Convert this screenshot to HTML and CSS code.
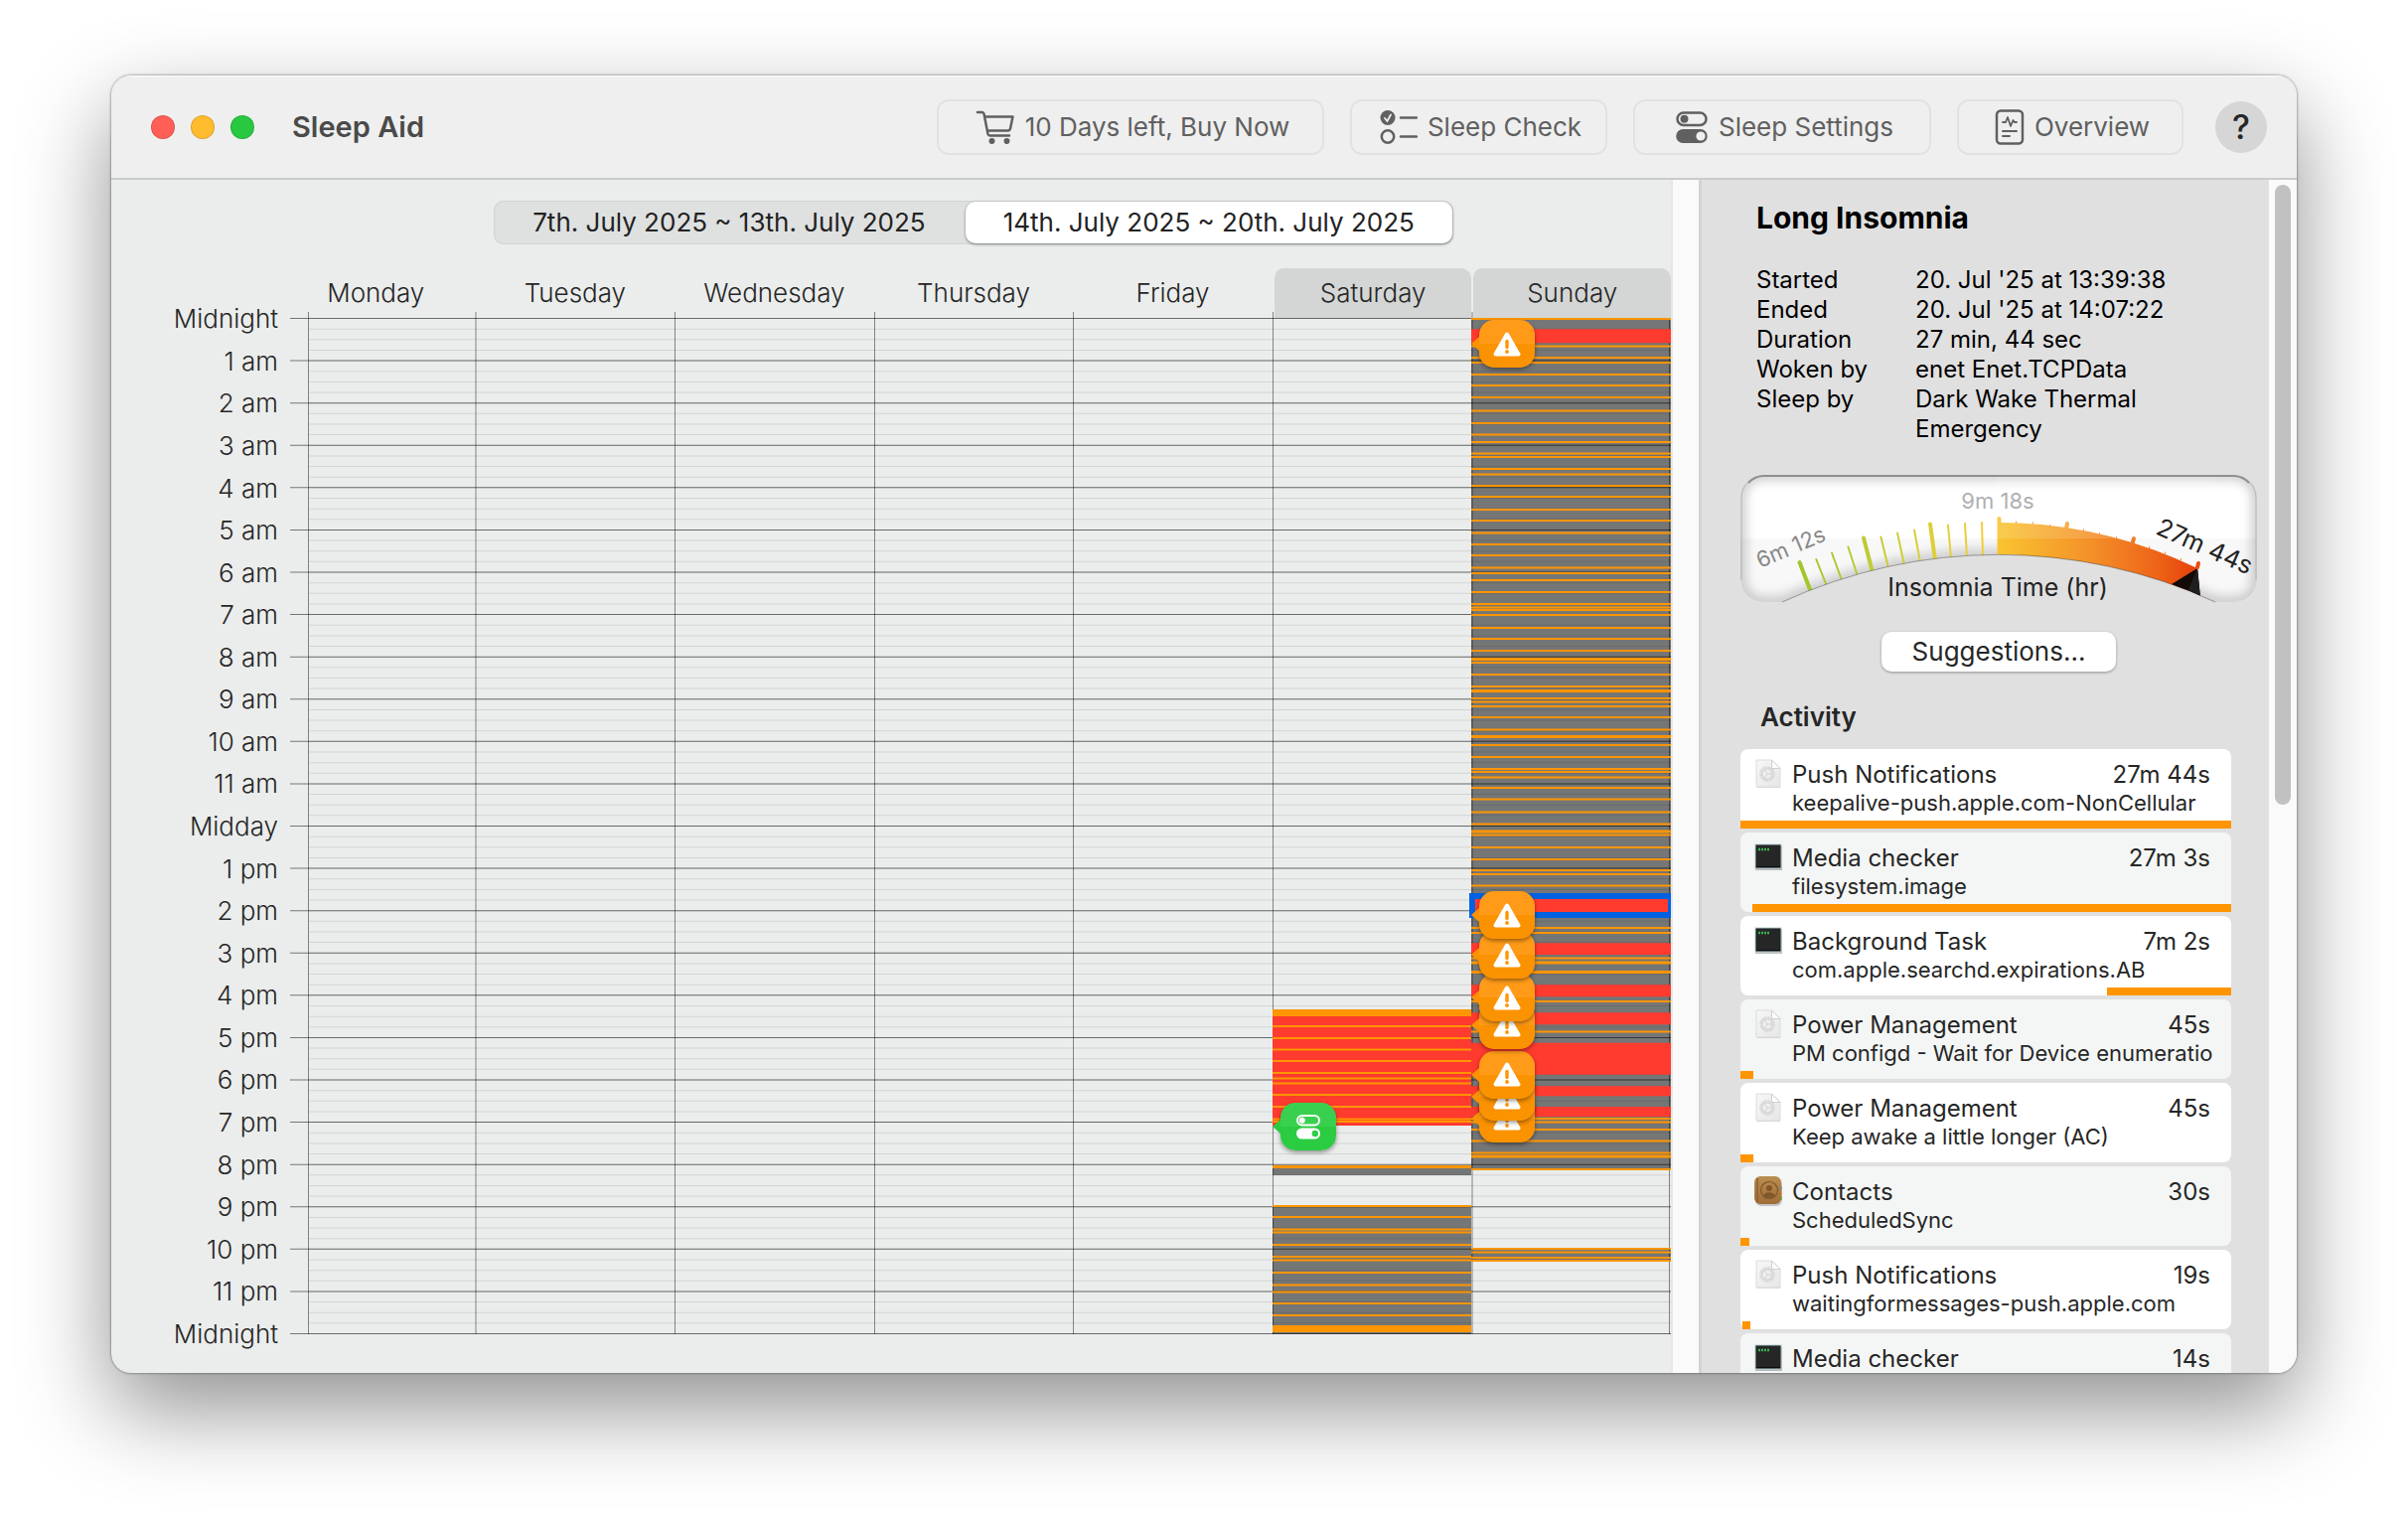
FILE: index.html
```html
<!DOCTYPE html>
<html lang="en">
<head>
<meta charset="utf-8">
<title>Sleep Aid</title>
<link rel="stylesheet" href="styles.css">
</head>
<body>
<svg class="defs" width="0" height="0" aria-hidden="true">
  <defs>
    <linearGradient id="paper" x1="0" y1="0" x2="1" y2="1"><stop offset="0" stop-color="#f7f7f7"/><stop offset="1" stop-color="#e6e6e6"/></linearGradient>
    <linearGradient id="leather" x1="0" y1="0" x2="0" y2="1"><stop offset="0" stop-color="#b98d4f"/><stop offset="1" stop-color="#a06d38"/></linearGradient>
    <symbol id="i-doc" viewBox="0 0 28 32">
      <path d="M3 3h15l8 8v19H3z" fill="#000" opacity=".16"/>
      <path d="M2 2h15.500l8.500 8.500V29H2z" fill="url(#paper)" stroke="#dcdcdc"/>
      <path d="M17.500 2l8.500 8.500h-8.500z" fill="#fff" stroke="#cfcfcf"/>
      <circle cx="13" cy="16" r="6.500" fill="none" stroke="#d2d2d2" stroke-width="2.500" stroke-dasharray="1.400 .8"/>
      <circle cx="13" cy="16" r="5" fill="none" stroke="#d2d2d2"/>
      <path d="M13 16h5M13 16l-3-4.500M13 16l-3 4.500" stroke="#d2d2d2"/>
    </symbol>
    <symbol id="i-term" viewBox="0 0 28 32">
      <rect x="1" y="5" width="27" height="24" fill="#000" opacity=".25"/>
      <rect x="1" y="3" width="26" height="24" fill="#0c0c0c" stroke="#b8d2d6"/>
      <rect x="2" y="4" width="24" height="21" fill="#262626"/>
      <path d="M4 8h11" stroke="#35b552" stroke-width="2.500" stroke-dasharray="2 1"/>
    </symbol>
    <symbol id="i-book" viewBox="0 0 28 32">
      <rect x="1" y="3" width="27" height="28" rx="6" fill="#000" opacity=".2"/>
      <path d="M26 11h2v4h-2z" fill="#56b4d8"/><path d="M26 16h2v4h-2z" fill="#e89a3a"/><path d="M26 21h2v4h-2z" fill="#6cb85a"/>
      <rect x="0" y="1" width="27" height="28" rx="6" fill="url(#leather)"/>
      <path d="M3 3v24" stroke="#8c6030" stroke-width="1.500"/>
      <circle cx="15" cy="15" r="8.500" fill="none" stroke="#80572b" stroke-width="1.200"/>
      <circle cx="15" cy="13" r="3" fill="#80572b"/><path d="M9 20.500c2-4.500 10-4.500 12 0a8.500 8.500 0 0 1-12 0z" fill="#80572b"/>
    </symbol>
    <symbol id="i-warn" viewBox="0 0 28 25">
      <path d="M14 2.500L25.500 22.500H2.500z" fill="#fff" stroke="#fff" stroke-width="4" stroke-linejoin="round"/>
      <path d="M14 9.500v6" stroke="#ff9500" stroke-width="3.400" stroke-linecap="round"/><circle cx="14" cy="20" r="1.900" fill="#ff9500"/>
    </symbol>
  </defs>
</svg>

<main class="window">
  <header class="titlebar">
    <div class="lights"><i class="light close"></i><i class="light mini"></i><i class="light full"></i></div>
    <h1 class="app-name">Sleep Aid</h1>
    <nav class="toolbar">
      <button class="tool buy" type="button">
        <svg width="40" height="34" viewBox="0 0 40 34" fill="none" stroke="#606060" stroke-width="2.500" stroke-linecap="round" stroke-linejoin="round"><path d="M2 2h4.500a2 2 0 0 1 2 1.600L12.500 24a2 2 0 0 0 2 1.500H34M9 6.500h28.500L35 18.500a2.500 2.500 0 0 1-2.400 2H12"/><circle cx="16.500" cy="31" r="1.800" fill="#606060"/><circle cx="31.500" cy="31" r="1.800" fill="#606060"/></svg>
        10 Days left, Buy Now</button>
      <button class="tool check" type="button">
        <svg width="38" height="34" viewBox="0 0 38 34" fill="none" stroke="#606060" stroke-width="2.500" stroke-linecap="round"><circle cx="8" cy="7.500" r="7.500" fill="#606060" stroke="none"/><path d="M5 8l2.400 3L11 4.500" stroke="#efefef" stroke-width="1.800"/><circle cx="8" cy="26.500" r="6.200"/><path d="M21 7.500h16M21 26.500h16"/></svg>
        Sleep Check</button>
      <button class="tool settings" type="button">
        <svg width="34" height="34" viewBox="0 0 34 34" fill="none" stroke="#606060" stroke-width="2.500"><rect x="2.500" y="2.500" width="29" height="12.500" rx="6.200"/><circle cx="9.500" cy="8.700" r="4" fill="#606060" stroke="none"/><rect x="1.200" y="19" width="31.500" height="14" rx="7" fill="#606060" stroke="none"/><circle cx="26" cy="26" r="4.600" fill="#efefef" stroke="none"/></svg>
        Sleep Settings</button>
      <button class="tool overview" type="button">
        <svg width="30" height="36" viewBox="0 0 30 36" fill="none" stroke="#606060" stroke-width="2.500" stroke-linecap="round" stroke-linejoin="round"><rect x="2" y="1.500" width="26" height="33" rx="4"/><path d="M8 13h3l2-5 3 9 2.500-6 1.300 2H22" stroke-width="1.800"/><path d="M8 22h14M8 27h7" stroke-width="2"/></svg>
        Overview</button>
      <button class="help" type="button" aria-label="Help">?</button>
    </nav>
  </header>

  <div class="content">
    <section class="week">
      <fieldset class="segments">
        <label class="segment"><input type="radio" name="week">7th. July 2025 ~ 13th. July 2025</label>
        <label class="segment"><input type="radio" name="week" checked>14th. July 2025 ~ 20th. July 2025</label>
      </fieldset>
      <div class="chart">
        <div class="days">
          <span class="day">Monday</span><span class="day">Tuesday</span><span class="day">Wednesday</span><span class="day">Thursday</span><span class="day">Friday</span><span class="day weekend">Saturday</span><span class="day weekend">Sunday</span>
        </div>
        <ol class="hours">
          <li>Midnight</li><li>1 am</li><li>2 am</li><li>3 am</li><li>4 am</li><li>5 am</li><li>6 am</li><li>7 am</li><li>8 am</li><li>9 am</li><li>10 am</li><li>11 am</li><li>Midday</li><li>1 pm</li><li>2 pm</li><li>3 pm</li><li>4 pm</li><li>5 pm</li><li>6 pm</li><li>7 pm</li><li>8 pm</li><li>9 pm</li><li>10 pm</li><li>11 pm</li><li>Midnight</li>
        </ol>
        <div class="plot">
          <svg class="plot-art" viewBox="278 320 1404 1023" preserveAspectRatio="none" fill="none">
            <!-- quarter-hour and hour rules -->
            <path d="M996.500 320V1343" stroke="#000" stroke-opacity=".1" stroke-width="1371" stroke-dasharray="1 9.646"/>
            <path d="M987 320V1343" stroke="#000" stroke-opacity=".5" stroke-width="1390" stroke-dasharray="1 41.583"/>
            <path d="M310.500 314V1343M479 314V1343M679.500 314V1343M880.500 314V1343M1080.500 314V1343M1281.500 314V1343M1482 314V1343M1680.500 320V1343" stroke="#000" stroke-opacity=".45"/>
            <!-- sleep -->
            <path d="M1481 321h201v857h-201zM1481 1256h201v14h-201zM1281 1174h200v9h-200zM1281 1214h200v129h-200z" fill="#000" fill-opacity=".5"/>
            <!-- insomnia -->
            <path d="M1481 331.300h201v14h-201zM1481 949.300h201v11.700h-201zM1481 991.300h201v12h-201zM1481 1019.300h201v12h-201zM1481 1049.700h201v32h-201zM1481 1093.300h201v10h-201zM1481 1114h201v10h-201zM1281 1020h200v113h-200z" fill="#ff3a2f"/>
            <!-- wakes -->
            <path stroke="#ff9500" stroke-width="2" d="M1481 321h201M1481 348.400h201M1481 360h201M1481 365h201M1481 377h201M1481 388h201M1481 400h201M1481 413.400h201M1481 426h201M1481 437.600h201M1481 445h201M1481 456.400h201M1481 460h201M1481 472h201M1481 477.400h201M1481 489h201M1481 500h201M1481 513h201M1481 524h201M1481 536.600h201M1481 548h201M1481 559h201M1481 571.600h201M1481 577h201M1481 584h201M1481 596h201M1481 608h201M1481 611.600h201M1481 614h201M1481 619h201M1481 632h201M1481 643h201M1481 655h201M1481 667h201M1481 679h201M1481 691h201M1481 703h201M1481 706.400h201M1481 711h201M1481 722h201M1481 734.400h201M1481 750h201M1481 762h201M1481 774h201M1481 777h201M1481 782.600h201M1481 793h201M1481 804.600h201M1481 817.600h201M1481 829.400h201M1481 840.600h201M1481 853h201M1481 865h201M1481 876h201M1481 880h201M1481 891.600h201M1481 934h201M1481 939h201M1481 964.400h201M1481 1008h201M1481 1038.400h201M1481 1126h201M1481 1129.400h201M1481 1137h201M1481 1148.400h201M1481 1160.400h201M1481 1177h201M1481 1257h201M1481 1260.400h201M1481 1266h201M1481 1269h201"/>
            <path stroke="#ff9500" stroke-width="2" d="M1281 1033h200M1281 1045h200M1281 1056.600h200M1281 1068h200M1281 1080h200M1281 1085.600h200M1281 1090.400h200M1281 1102h200M1281 1114h200M1281 1126.400h200M1281 1129h200M1281 1214h200M1281 1225h200M1281 1237.400h200M1281 1240.600h200M1281 1253h200M1281 1265h200M1281 1268.600h200M1281 1281h200M1281 1293.400h200M1281 1300.600h200M1281 1312h200M1281 1324h200"/>
            <path stroke="#ff9500" stroke-width="3" d="M1481 663.500h201M1481 695.500h201M1481 741.500h201M1481 837h201M1481 969h201M1481 978.500h201M1481 1164h201M1281 1174.500h200"/>
            <path stroke="#ff9500" stroke-width="7" d="M1281 1019.500h200M1281 1337.500h200"/>
            <!-- selected interval -->
            <path d="M1479 899h203v25h-203z" fill="#0062e0"/>
            <path d="M1485 905h194v13h-194z" fill="#ff3a2f"/>
          </svg>
          <button class="pin sun" type="button" style="top:76.500%" aria-label="Warning"><svg width="28" height="25"><use href="#i-warn"/></svg></button>
          <button class="pin sun" type="button" style="top:74.400%" aria-label="Warning"><svg width="28" height="25"><use href="#i-warn"/></svg></button>
          <button class="pin sun" type="button" style="top:72.200%" aria-label="Warning"><svg width="28" height="25"><use href="#i-warn"/></svg></button>
          <button class="pin sun" type="button" style="top:67.300%" aria-label="Warning"><svg width="28" height="25"><use href="#i-warn"/></svg></button>
          <button class="pin sun" type="button" style="top:64.600%" aria-label="Warning"><svg width="28" height="25"><use href="#i-warn"/></svg></button>
          <button class="pin sun" type="button" style="top:60.400%" aria-label="Warning"><svg width="28" height="25"><use href="#i-warn"/></svg></button>
          <button class="pin sun" type="button" style="top:56.500%" aria-label="Warning"><svg width="28" height="25"><use href="#i-warn"/></svg></button>
          <button class="pin sun" type="button" style="top:.2%" aria-label="Warning"><svg width="28" height="25"><use href="#i-warn"/></svg></button>
          <button class="pin sat" type="button" style="top:77.300%" aria-label="Settings changed"><svg width="26" height="26" viewBox="0 0 26 26" fill="none"><rect x="2" y="2" width="22" height="9.500" rx="4.700" stroke="#fff" stroke-width="2"/><circle cx="6.800" cy="6.700" r="3" fill="#fff"/><rect x="1" y="14.500" width="24" height="11" rx="5.500" fill="#fff"/><circle cx="19.800" cy="20" r="3.200" fill="#2ecc44"/></svg></button>
        </div>
      </div>
    </section>

    <div class="gutter"></div>

    <aside class="inspector">
      <div class="details">
        <h2 class="kind">Long Insomnia</h2>
        <dl class="facts">
          <dt>Started</dt><dd>20. Jul '25 at 13:39:38</dd>
          <dt>Ended</dt><dd>20. Jul '25 at 14:07:22</dd>
          <dt>Duration</dt><dd>27 min, 44 sec</dd>
          <dt>Woken by</dt><dd>enet Enet.TCPData</dd>
          <dt>Sleep by</dt><dd>Dark Wake Thermal Emergency</dd>
        </dl>
        <svg class="gauge" width="520" height="128" viewBox="0 0 520 128">
          <defs>
            <clipPath id="dial"><path d="M0 22A22 22 0 0 1 22 0H498A22 22 0 0 1 520 22V106A22 22 0 0 1 498 128H478A522 522 0 0 0 42 128H22A22 22 0 0 1 0 106z"/></clipPath>
            <linearGradient id="heat" gradientUnits="userSpaceOnUse" x1="259" y1="0" x2="460" y2="0"><stop offset="0" stop-color="#f9c430"/><stop offset=".45" stop-color="#f4922a"/><stop offset=".8" stop-color="#ee6418"/><stop offset="1" stop-color="#e4400a"/></linearGradient>
            <linearGradient id="mild" gradientUnits="userSpaceOnUse" x1="60" y1="0" x2="262" y2="0"><stop offset="0" stop-color="#9fc62c"/><stop offset=".6" stop-color="#d8d03a"/><stop offset="1" stop-color="#f9cb3c"/></linearGradient>
            <filter id="soft" x="-10%" y="-30%" width="120%" height="160%"><feGaussianBlur stdDeviation="6"/></filter>
          </defs>
          <g clip-path="url(#dial)">
            <path d="M0 0h520v128H0z" fill="#fff"/>
            <path d="M0 64h520v64H0z" fill="#f8f8f8"/>
            <path d="M0 20A22 22 0 0 1 22 0H498A22 22 0 0 1 520 22V106A22 22 0 0 1 498 128H478A522 522 0 0 0 42 128H22A22 22 0 0 1 0 106z" fill="none" stroke="#000" stroke-opacity=".28" stroke-width="8" filter="url(#soft)"/>
            <g stroke="url(#mild)" stroke-linecap="round">
              <path stroke-width="4" d="M59.500 88L71 118M124 63.500L133 98M191 49.500L196 86"/>
              <path stroke-width="2" d="M76.300 85L87 112M92 78.500L102 106M108.400 72.500L118 102M141.400 62.500L149 94M158 58.500L165 91M175 55.500L181 88M209 50.500L212 84M226 49L228 83M243 48L244 82"/>
            </g>
            <path d="M258.500 44a2 2 0 0 1 4 0v4A460 460 0 0 1 460 94L463 124A522 522 0 0 0 258.500 80z" fill="url(#heat)"/>
            <path d="M460 94L434 110L463 124z" fill="#140a06"/><path d="M460 94L450 118L463 124z" fill="#1f1f1f"/>
            <g stroke-linecap="round" stroke-width="4"><path d="M329 49l-1 5" stroke="#f6a030"/><path d="M396 64l-2 7" stroke="#f07a20"/><path d="M461 89l-1 4" stroke="#ea4c10"/></g>
            <path d="M277 47.500h1M294 48.500h1M311 51h1M345 55.500h1M361 59h1M378 63h1M411 73h1M427 78.500h1M443 85h1" stroke="#f08a28" stroke-width="2"/>
            <path d="M258 0h220v64H258z" fill="#fff" opacity=".14"/>
          </g>
          <path d="M1 106V23A22 22 0 0 1 23 1H497A22 22 0 0 1 519 23V106" fill="none" stroke="#8f8f8f" stroke-opacity=".5"/>
          <path d="M8 8A22 22 0 0 1 23 1H497A22 22 0 0 1 512 8" fill="none" stroke="#8f8f8f" stroke-width="2"/>
          <path d="M42 128A522 522 0 0 1 478 128" fill="none" stroke="#000" stroke-opacity=".35"/>
          <text class="g-low" transform="translate(20 94) rotate(-23)">6m 12s</text>
          <text class="g-mid" x="259" y="34" text-anchor="middle">9m 18s</text>
          <text class="g-now" transform="translate(417 59) rotate(24)">27m 44s</text>
          <text class="g-name" x="259" y="122" text-anchor="middle">Insomnia Time (hr)</text>
        </svg>
        <button class="suggest" type="button">Suggestions...</button>
        <h3 class="section">Activity</h3>
        <ul class="activity">
          <li class="item"><svg class="icon"><use href="#i-doc"/></svg><span class="name">Push Notifications</span><span class="time">27m 44s</span><span class="sub">keepalive-push.apple.com-NonCellular</span><i class="bar" style="left:0;width:100%"></i></li>
          <li class="item"><svg class="icon"><use href="#i-term"/></svg><span class="name">Media checker</span><span class="time">27m 3s</span><span class="sub">filesystem.image</span><i class="bar" style="left:2.500%;width:97.500%"></i></li>
          <li class="item"><svg class="icon"><use href="#i-term"/></svg><span class="name">Background Task</span><span class="time">7m 2s</span><span class="sub">com.apple.searchd.expirations.AB</span><i class="bar" style="left:74.700%;width:25.300%"></i></li>
          <li class="item"><svg class="icon"><use href="#i-doc"/></svg><span class="name">Power Management</span><span class="time">45s</span><span class="sub">PM configd - Wait for Device enumeratio</span><i class="bar" style="left:0;width:2.700%"></i></li>
          <li class="item"><svg class="icon"><use href="#i-doc"/></svg><span class="name">Power Management</span><span class="time">45s</span><span class="sub">Keep awake a little longer (AC)</span><i class="bar" style="left:0;width:2.700%"></i></li>
          <li class="item"><svg class="icon"><use href="#i-book"/></svg><span class="name">Contacts</span><span class="time">30s</span><span class="sub">ScheduledSync</span><i class="bar" style="left:0;width:1.800%"></i></li>
          <li class="item"><svg class="icon"><use href="#i-doc"/></svg><span class="name">Push Notifications</span><span class="time">19s</span><span class="sub">waitingformessages-push.apple.com</span><i class="bar" style="left:.5%;width:1.600%"></i></li>
          <li class="item"><svg class="icon"><use href="#i-term"/></svg><span class="name">Media checker</span><span class="time">14s</span></li>
        </ul>
      </div>
      <div class="scrollbar"><div class="thumb"></div></div>
    </aside>
  </div>
</main>
</body>
</html>
```
FILE: styles.css
```css
* { box-sizing: border-box; }
body {
  margin: 0;
  padding: 76px 112px 148px;
  min-height: 100vh;
  background: #fff;
  color: #262626;
  font: 26px/32px Inter, "Liberation Sans", sans-serif;
}
button { font: inherit; color: inherit; border: 0; padding: 0; }
h1, h2, h3, ul, ol, dl, dd, fieldset { margin: 0; padding: 0; border: 0; list-style: none; }
.defs { position: absolute; }

.window {
  height: calc(100vh - 224px);
  display: flex;
  flex-direction: column;
  overflow: hidden;
  border-radius: 20px;
  background: #ebedec;
  box-shadow: 0 0 2px 1px rgba(0, 0, 0, .28), 0 36px 90px rgba(0, 0, 0, .44);
}

.titlebar {
  flex: none;
  display: flex;
  align-items: center;
  height: 105px;
  padding: 0 30px 0 40px;
  background: #efefef;
  border-bottom: 2px solid #cbcbcb;
  border-top: 1px solid #fff;
}
.lights { display: flex; gap: 16px; }
.light { width: 24px; height: 24px; border-radius: 50%; border: 1px solid rgba(0, 0, 0, .12); }
.close { background: #ff5f57; }
.mini { background: #febc2e; }
.full { background: #28c840; }
.app-name { margin-left: 38px; font-size: 29px; font-weight: 600; color: #4a4a4a; white-space: nowrap; }
.toolbar { margin-left: auto; display: flex; align-items: center; gap: 26px; }
.tool {
  display: flex;
  align-items: center;
  justify-content: center;
  gap: 10px;
  height: 56px;
  padding-left: 4px;
  border: 2px solid #e2e2e2;
  border-radius: 12px;
  background: transparent;
  color: #606060;
  white-space: nowrap;
}
.buy { width: 390px; }
.check { width: 259px; }
.settings { width: 300px; }
.overview { width: 228px; }
.help {
  width: 52px;
  height: 52px;
  margin-left: 6px;
  border-radius: 50%;
  background: #d6d6d6;
  font-size: 34px;
  font-weight: 500;
}

.content { flex: 1; min-height: 0; display: flex; }

.week { flex: 1; min-width: 0; padding-top: 21px; }
.segments {
  display: flex;
  width: max-content;
  height: 44px;
  margin: 0 auto;
  transform: translateX(83px);
  border-radius: 10px;
  background: #dfe1e0;
  box-shadow: inset 0 0 2px rgba(0, 0, 0, .18);
  color: #222;
}
.segment {
  display: flex;
  align-items: center;
  margin: 1px;
  padding: 0 38px;
  border-radius: 10px;
  cursor: pointer;
  white-space: nowrap;
}
.segment input { position: absolute; opacity: 0; }
.segment:has(input:checked) { background: #fff; box-shadow: 0 1px 3px rgba(0, 0, 0, .45); }

.chart {
  display: grid;
  grid-template-columns: 166px 1fr;
  grid-template-rows: 50px 1022px;
  margin-top: 24px;
}
.days { grid-column: 2; display: grid; grid-template-columns: repeat(7, 1fr); font-weight: 300; }
.day { display: flex; align-items: center; justify-content: center; }
.weekend { background: #d4d6d5; border-radius: 10px 10px 0 0; border-left: 2px solid #ebedec; }
.hours { display: flex; flex-direction: column; margin: -20px -2px -22px 0; text-align: right; font-weight: 300; }
.hours li { flex: 1; display: flex; align-items: center; justify-content: flex-end; }
.plot { position: relative; }
.plot-art { display: block; width: 100%; height: 1023px; overflow: visible; }

.pin {
  position: absolute;
  width: 56px;
  height: 48px;
  display: flex;
  align-items: center;
  justify-content: center;
  border-radius: 15px;
  background: linear-gradient(#ff9b18 50%, #fb9200 50%);
  box-shadow: 0 2px 4px rgba(0, 0, 0, .4);
}
.pin::before {
  content: "";
  position: absolute;
  left: -8px;
  top: 17px;
  border: solid transparent;
  border-width: 7px 8px 7px 0;
  border-right-color: #fb9200;
}
.sun { right: 137px; }
.sat { right: 337px; background: linear-gradient(#3ad04f 50%, #2bcb42 50%); }
.sat::before { border-right-color: #2bcb42; }

.gutter { width: 31px; background: #fafafa; border-left: 2px solid #e6e6e6; border-right: 3px solid #d3d3d3; }

.inspector { width: 599px; display: flex; overflow: hidden; background: #e0e0e0; }
.details { flex: 1; min-width: 0; padding: 22px 0 0 39px; }
.scrollbar { width: 28px; padding: 5px 6px; background: #fafafa; }
.thumb { height: 624px; border-radius: 8px; background: #c1c1c1; }
.kind { padding-left: 16px; font-size: 30px; font-weight: 700; line-height: 32px; color: #000; }
.facts {
  display: grid;
  grid-template-columns: 160px 270px;
  margin: 32px 0 0 16px;
  font-size: 24px;
  line-height: 30px;
  color: #000;
}
.gauge { display: block; margin-top: 31px; overflow: visible; }
.gauge text { fill: #222; font-size: 22px; }
.gauge .g-low { fill: #888; }
.gauge .g-mid { fill: #b0b0b0; }
.gauge .g-now { font-size: 25px; }
.gauge .g-name { font-size: 25px; }
.suggest {
  display: block;
  width: 236px;
  height: 40px;
  margin: 30px 0 0 142px;
  border-radius: 10px;
  background: #fff;
  box-shadow: 0 1px 3px rgba(0, 0, 0, .35);
}
.section { margin: 30px 0 0 20px; font-size: 26px; font-weight: 600; }
.activity { width: 494px; margin-top: 16px; }
.item {
  position: relative;
  display: grid;
  grid-template-columns: 38px 1fr auto;
  grid-template-rows: 29px 28px;
  height: 80px;
  margin-bottom: 4px;
  padding: 11px 21px 0 14px;
  border-radius: 8px;
  background: #fff;
  white-space: nowrap;
}
.item:nth-child(even) { background: #f4f6f5; }
.icon { width: 28px; height: 32px; margin-top: -2px; }
.name, .time { font-size: 24px; line-height: 30px; }
.sub { grid-column: 2 / 4; margin-right: -8px; font-size: 22px; line-height: 28px; overflow: hidden; }
.bar { position: absolute; bottom: 0; height: 8px; background: #ff9500; }
```
